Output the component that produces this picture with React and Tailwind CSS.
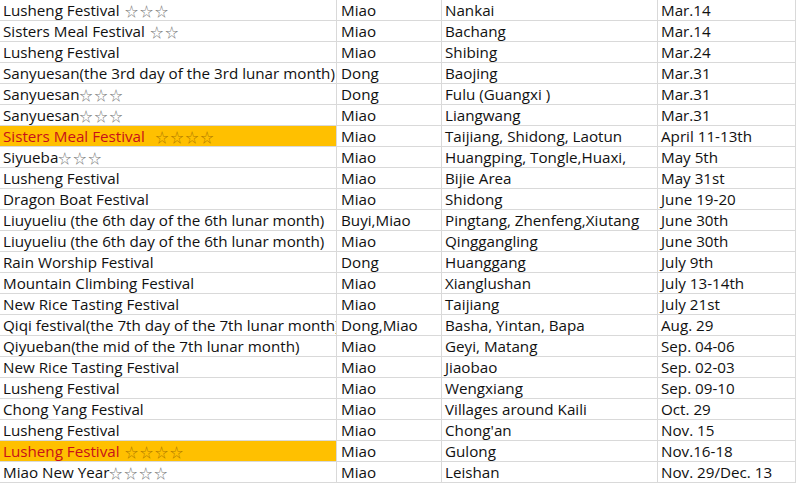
import React from 'react';

const rows = [
    { name: 'Lusheng Festival', stars: ' ☆☆☆', people: 'Miao', place: 'Nankai', date: 'Mar.14' },
    { name: 'Sisters Meal Festival', stars: ' ☆☆', people: 'Miao', place: 'Bachang', date: 'Mar.14' },
    { name: 'Lusheng Festival', people: 'Miao', place: 'Shibing', date: 'Mar.24' },
    { name: 'Sanyuesan(the 3rd day of the 3rd lunar month)', people: 'Dong', place: 'Baojing', date: 'Mar.31' },
    { name: 'Sanyuesan', stars: '☆☆☆', people: 'Dong', place: 'Fulu (Guangxi )', date: 'Mar.31' },
    { name: 'Sanyuesan', stars: '☆☆☆', people: 'Miao', place: 'Liangwang', date: 'Mar.31' },
    { name: 'Sisters Meal Festival', stars: '  ☆☆☆☆', people: 'Miao', place: 'Taijiang, Shidong, Laotun', date: 'April 11-13th', hot: true },
    { name: 'Siyueba', stars: '☆☆☆', people: 'Miao', place: 'Huangping, Tongle,Huaxi,', date: 'May 5th' },
    { name: 'Lusheng Festival', people: 'Miao', place: 'Bijie Area', date: 'May 31st' },
    { name: 'Dragon Boat Festival', people: 'Miao', place: 'Shidong', date: 'June 19-20' },
    { name: 'Liuyueliu (the 6th day of the 6th lunar month)', people: 'Buyi,Miao', place: 'Pingtang, Zhenfeng,Xiutang', date: 'June 30th' },
    { name: 'Liuyueliu (the 6th day of the 6th lunar month)', people: 'Miao', place: 'Qinggangling', date: 'June 30th' },
    { name: 'Rain Worship Festival', people: 'Dong', place: 'Huanggang', date: 'July 9th' },
    { name: 'Mountain Climbing Festival', people: 'Miao', place: 'Xianglushan', date: 'July 13-14th' },
    { name: 'New Rice Tasting Festival', people: 'Miao', place: 'Taijiang', date: 'July 21st' },
    { name: 'Qiqi festival(the 7th day of the 7th lunar month)', people: 'Dong,Miao', place: 'Basha, Yintan, Bapa', date: 'Aug. 29' },
    { name: 'Qiyueban(the mid of the 7th lunar month)', people: 'Miao', place: 'Geyi, Matang', date: 'Sep. 04-06' },
    { name: 'New Rice Tasting Festival', people: 'Miao', place: 'Jiaobao', date: 'Sep. 02-03' },
    { name: 'Lusheng Festival', people: 'Miao', place: 'Wengxiang', date: 'Sep. 09-10' },
    { name: 'Chong Yang Festival', people: 'Miao', place: 'Villages around Kaili', date: 'Oct. 29' },
    { name: 'Lusheng Festival', people: 'Miao', place: "Chong'an", date: 'Nov. 15' },
    { name: 'Lusheng Festival', stars: ' ☆☆☆☆', people: 'Miao', place: 'Gulong', date: 'Nov.16-18', hot: true },
    { name: 'Miao New Year', stars: '☆☆☆☆', people: 'Miao', place: 'Leishan', date: 'Nov. 29/Dec. 13' },
];

const cell = 'h-[21px] leading-[21px] border-b border-r border-[#d9d9d9] whitespace-nowrap overflow-hidden';

const Stars = ({ text, hot }) => (
    <span className={`text-[13px] tracking-[2px] ${hot ? 'text-[#b07a00]' : 'text-[#7a7a7a]'}`} style={{ whiteSpace: 'pre' }}>
        {text}
    </span>
);

const App = () => {
    return (
        <div className="w-[800px] h-[484px] bg-white overflow-hidden text-[15.2px] text-[#111]" style={{ fontFamily: '"Open Sans", "Noto Sans CJK SC", sans-serif' }}>
            <div className="grid grid-cols-[337px_105px_216px_138px]">
                {rows.map((r, i) => (
                    <React.Fragment key={i}>
                        <div className={`${cell} pl-[3px] ${r.hot ? 'bg-[#ffc000] text-[#c8101a]' : ''}`}>
                            {r.name}
                            {r.stars && <Stars text={r.stars} hot={r.hot} />}
                        </div>
                        <div className={`${cell} pl-[4px]`}>{r.people}</div>
                        <div className={`${cell} pl-[3px]`}>{r.place}</div>
                        <div className={`${cell} pl-[3px]`}>{r.date}</div>
                    </React.Fragment>
                ))}
            </div>
        </div>
    );
};

export default App;
